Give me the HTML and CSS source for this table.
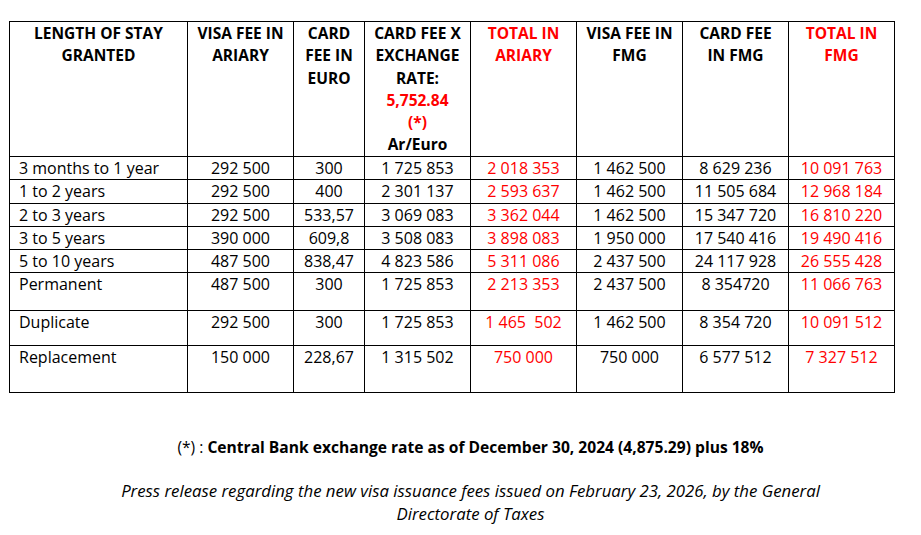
FILE: index.html
```html
<!DOCTYPE html>
<html lang="en">
<head>
<meta charset="utf-8">
<title>Visa fees</title>
<link rel="stylesheet" href="styles.css">
</head>
<body>
<div class="page">
  <table class="fees">
    <colgroup>
      <col class="c1"><col class="c2"><col class="c3"><col class="c4">
      <col class="c5"><col class="c6"><col class="c7"><col class="c8">
    </colgroup>
    <thead>
      <tr class="head">
        <th>LENGTH OF STAY GRANTED</th>
        <th>VISA FEE IN ARIARY</th>
        <th>CARD FEE IN EURO</th>
        <th>CARD FEE X EXCHANGE RATE: <span class="red">5,752.84<br>(*)</span><br>Ar/Euro</th>
        <th class="red">TOTAL IN ARIARY</th>
        <th>VISA FEE IN FMG</th>
        <th>CARD FEE IN FMG</th>
        <th class="red">TOTAL IN FMG</th>
      </tr>
    </thead>
    <tbody>
      <tr class="r23">
        <td class="label">3 months to 1 year</td><td>292 500</td><td>300</td><td>1 725 853</td>
        <td class="red">2 018 353</td><td>1 462 500</td><td>8 629 236</td><td class="red">10 091 763</td>
      </tr>
      <tr class="r24">
        <td class="label">1 to 2 years</td><td>292 500</td><td>400</td><td>2 301 137</td>
        <td class="red">2 593 637</td><td>1 462 500</td><td>11 505 684</td><td class="red">12 968 184</td>
      </tr>
      <tr class="r23">
        <td class="label">2 to 3 years</td><td>292 500</td><td>533,57</td><td>3 069 083</td>
        <td class="red">3 362 044</td><td>1 462 500</td><td>15 347 720</td><td class="red">16 810 220</td>
      </tr>
      <tr class="r23">
        <td class="label">3 to 5 years</td><td>390 000</td><td>609,8</td><td>3 508 083</td>
        <td class="red">3 898 083</td><td>1 950 000</td><td>17 540 416</td><td class="red">19 490 416</td>
      </tr>
      <tr class="r23">
        <td class="label">5 to 10 years</td><td>487 500</td><td>838,47</td><td>4 823 586</td>
        <td class="red">5 311 086</td><td>2 437 500</td><td>24 117 928</td><td class="red">26 555 428</td>
      </tr>
      <tr class="r38">
        <td class="label">Permanent</td><td>487 500</td><td>300</td><td>1 725 853</td>
        <td class="red">2 213 353</td><td>2 437 500</td><td>8 354720</td><td class="red">11 066 763</td>
      </tr>
      <tr class="r35">
        <td class="label">Duplicate</td><td>292 500</td><td>300</td><td>1 725 853</td>
        <td class="red pre">1 465  502</td><td>1 462 500</td><td>8 354 720</td><td class="red">10 091 512</td>
      </tr>
      <tr class="r47">
        <td class="label">Replacement</td><td>150 000</td><td>228,67</td><td>1 315 502</td>
        <td class="red">750 000</td><td>750 000</td><td>6 577 512</td><td class="red">7 327 512</td>
      </tr>
    </tbody>
  </table>

  <div class="notes">
    <p class="rate">(*) : <strong>Central Bank exchange rate as of December 30, 2024 (4,875.29) plus 18%</strong></p>
    <p class="release">Press release regarding the new visa issuance fees issued on February 23, 2026, by the General Directorate of Taxes</p>
  </div>
</div>
</body>
</html>
```
FILE: styles.css
```css
html, body {
  margin: 0;
  padding: 0;
  background: #ffffff;
}

body {
  font-family: "Open Sans", "Liberation Sans", sans-serif;
  font-size: 16px;
  color: #000000;
}

.page {
  padding: 21px 0 0 9px;
}

.fees {
  border-collapse: collapse;
  table-layout: fixed;
  width: 885px;
}

.c1 { width: 178px; }
.c2 { width: 106px; }
.c3 { width: 71px; }
.c4 { width: 106px; }
.c5 { width: 106px; }
.c6 { width: 106px; }
.c7 { width: 106px; }
.c8 { width: 106px; }

.fees th,
.fees td {
  border: 1px solid #000000;
  padding: 0 2px;
  text-align: center;
  vertical-align: top;
  line-height: 22px;
}

.fees th {
  font-weight: 700;
  font-size: 15.5px;
  line-height: 22.3px;
  padding: 0 8px;
}

.head th {
  height: 134px;
}

.fees td.label {
  text-align: left;
  padding-left: 9px;
}

.r23 td { height: 22px; }
.r24 td { height: 23px; }
.r38 td { height: 37px; }
.r35 td { height: 34px; }
.r47 td { height: 46px; }

.red {
  color: #ff0000;
}

.pre {
  white-space: pre;
}

.notes {
  padding-left: 11px;
  text-align: center;
}

.notes p {
  margin: 0;
  line-height: 23.5px;
}

.rate {
  padding-top: 43px;
  font-size: 15.6px;
}

.rate strong {
  font-weight: 700;
}

.release {
  padding: 19px 80px 0 80px;
  font-style: italic;
  font-size: 16.8px;
}
```
